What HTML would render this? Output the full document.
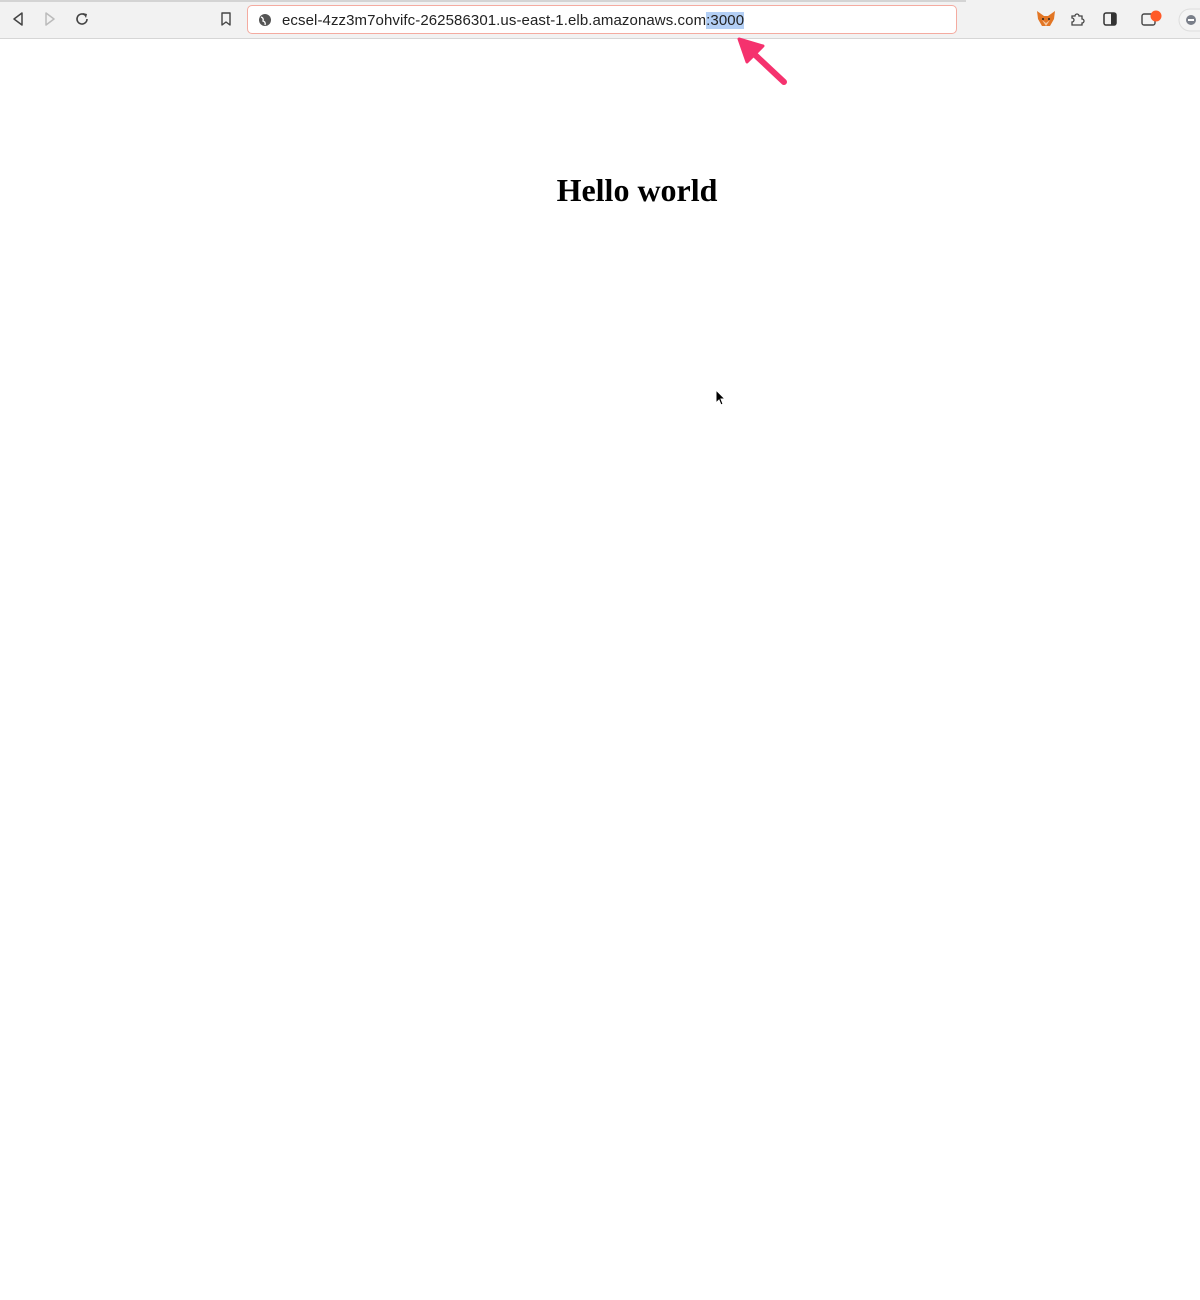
<!DOCTYPE html>
<html><head><meta charset="utf-8"><style>
html,body{margin:0;padding:0;width:1200px;height:1300px;background:#fff;overflow:hidden;position:relative;font-family:"Liberation Sans",sans-serif}
.bar{position:absolute;left:0;top:0;width:1200px;height:38px;background:#f2f2f2;border-bottom:1px solid #d6d6d6}
.topline{position:absolute;left:0;top:0;width:966px;height:2px;background:#d4d4d4}
.url{position:absolute;left:247px;top:5px;width:710px;height:29px;border:1.5px solid #f4aba0;border-radius:5px;background:#fff;box-sizing:border-box}
.url span.t{position:absolute;left:34px;top:6px;font-size:15px;letter-spacing:0.085px;color:#222;white-space:nowrap}
.sel{background:#b3cff5}
h1{position:absolute;left:0;width:1274px;text-align:center;top:172px;margin:0;font-family:"Liberation Serif",serif;font-size:32px;font-weight:bold}
svg{position:absolute}
</style></head><body>
<div class="bar"><div class="topline"></div></div>
<svg style="left:10px;top:11px" width="16" height="16"><path d="M12 2 L4 8 L12 14 Z" fill="none" stroke="#444" stroke-width="1.5" stroke-linejoin="round"/></svg>
<svg style="left:42px;top:11px" width="16" height="16"><path d="M4 2 L12 8 L4 14 Z" fill="none" stroke="#bbb" stroke-width="1.5" stroke-linejoin="round"/></svg>
<svg style="left:74px;top:11px" width="16" height="16"><path d="M13 8 A5 5 0 1 1 11 4" fill="none" stroke="#444" stroke-width="1.6"/><path d="M9 2 L13 3 L12 7 Z" fill="#444"/></svg>
<svg style="left:218px;top:11px" width="16" height="16"><path d="M4 2 H12 V14 L8 11 L4 14 Z" fill="none" stroke="#444" stroke-width="1.4" stroke-linejoin="round"/></svg>
<div class="url">
<svg style="left:10px;top:7px" width="14" height="14"><circle cx="7" cy="7" r="6" fill="#555"/><path d="M3 4 Q6 5 5 8 Q8 9 7 12" fill="none" stroke="#fff" stroke-width="1.3"/></svg>
<span class="t">ecsel-4zz3m7ohvifc-262586301.us-east-1.elb.amazonaws.com<span class="sel">:3000</span></span>
</div>
<svg style="left:1036px;top:10px" width="20" height="18"><path d="M1 1 L8 6 H12 L19 1 L18 9 L14 16 H6 L2 9 Z" fill="#e27625"/><path d="M6 10 L10 13 L14 10 L10 16 Z" fill="#f5c7a0"/><circle cx="7" cy="9" r="1" fill="#222"/><circle cx="13" cy="9" r="1" fill="#222"/></svg>
<svg style="left:1069px;top:11px" width="16" height="16"><path d="M3 5 H6 A2 2 0 0 1 10 5 H13 V8 A2 2 0 0 1 13 12 V14 H3 V11 A2 2 0 0 0 3 7 Z" fill="none" stroke="#444" stroke-width="1.3"/></svg>
<svg style="left:1102px;top:11px" width="16" height="16"><rect x="2" y="2" width="12" height="12" rx="2" fill="none" stroke="#333" stroke-width="1.5"/><rect x="9" y="2" width="5" height="12" fill="#333"/></svg>
<svg style="left:1140px;top:9px" width="26" height="20"><rect x="2" y="5" width="13" height="11" rx="2" fill="none" stroke="#444" stroke-width="1.4"/><circle cx="16" cy="7" r="5.5" fill="#ff5a28"/></svg>
<svg style="left:1176px;top:8px" width="24" height="24"><path d="M24 1 H14 A11 11 0 0 0 14 23 H24" fill="#f4f4f4" stroke="#ddd"/><circle cx="15" cy="12" r="5" fill="#7a7f8a"/><rect x="12" y="11" width="6" height="2" fill="#fff"/></svg>
<svg style="left:735px;top:36px" width="55" height="52"><path d="M49 46 L17 16" stroke="#f5326e" stroke-width="6" stroke-linecap="round"/><path d="M4 3 L28 10 L12 26 Z" fill="#f5326e" stroke="#f5326e" stroke-width="3" stroke-linejoin="round"/></svg>
<h1>Hello world</h1>
<svg style="left:715px;top:389px" width="12" height="18"><path d="M1 1 V14 L4 11 L6 16 L8 15 L6 10 H10 Z" fill="#000" stroke="#fff" stroke-width="1"/></svg>
</body></html>
